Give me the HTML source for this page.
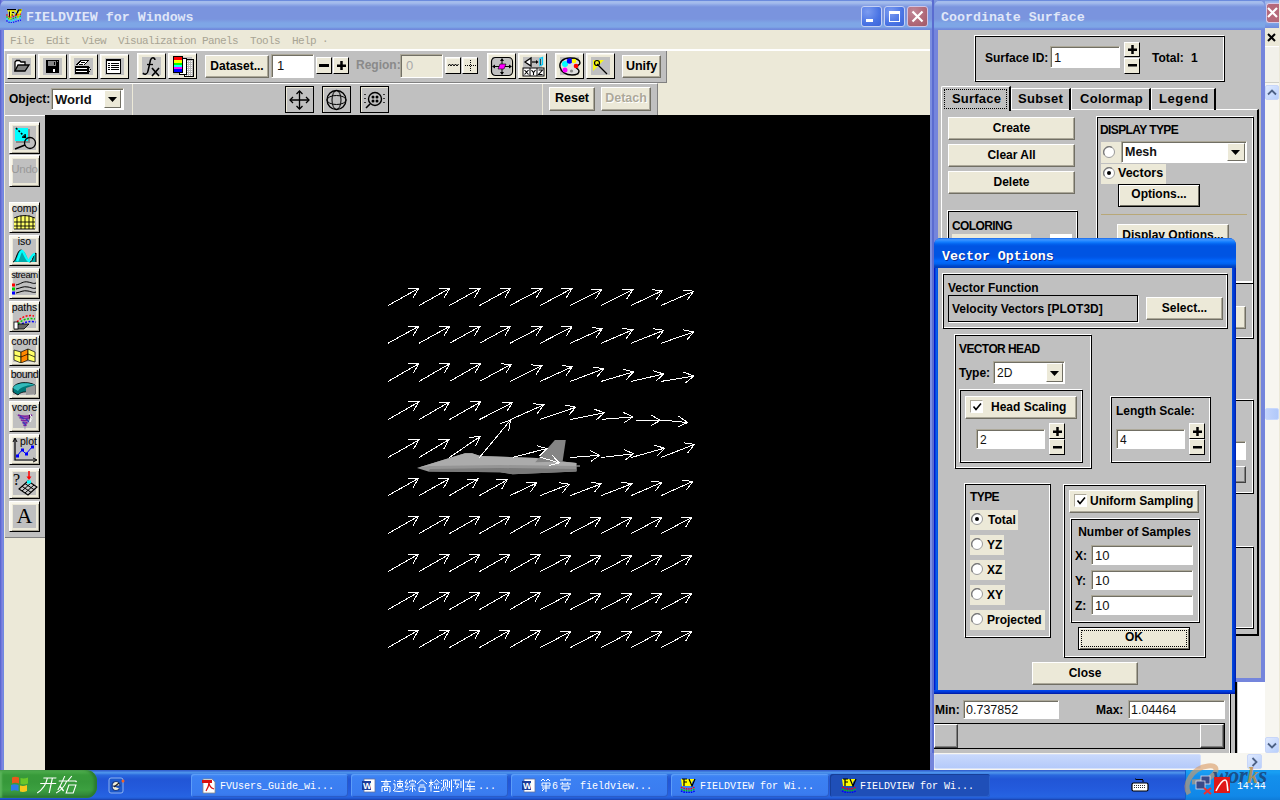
<!DOCTYPE html>
<html><head><meta charset="utf-8">
<style>
*{margin:0;padding:0;box-sizing:border-box}
html,body{width:1280px;height:800px;overflow:hidden;background:#000}
body{position:relative;font-family:"Liberation Sans",sans-serif;font-size:12px;color:#000}
.a{position:absolute}
.mono{font-family:"Liberation Mono",monospace}
.beige{background:#ECE9D8}
.gray{background:#C0C0C0}
.btn{position:absolute;background:#ECE9D8;border:1px solid;border-color:#fff #716F64 #716F64 #fff;box-shadow:inset -1px -1px #ACA899;font-weight:bold;font-size:12px;text-align:center;white-space:nowrap}
.ib{position:absolute;background:#ECE9D8;border:1px solid;border-color:#fff #000 #000 #fff;box-shadow:inset 1px 1px #F8F6EC}
.ib>i{position:absolute;left:4px;top:3px;right:4px;bottom:3px;background:#C0C0C0;display:block}
.fld{position:absolute;background:#fff;border:1px solid;border-color:#ACA899 #fff #fff #ACA899;box-shadow:inset 1px 1px #716F64;font-size:12px;color:#111;white-space:nowrap;overflow:hidden}
.et{position:absolute;border:1px solid #fff}
.et>b{position:absolute;left:0;top:0;right:-2px;bottom:-2px;border:1px solid #000;display:block}
.lbl{position:absolute;font-weight:bold;font-size:12px;white-space:nowrap}
.ttl{position:absolute;font-family:"Liberation Mono",monospace;font-weight:bold;font-size:13.3px;color:#DFE6F8;white-space:pre}
</style></head><body>

<!-- ============ MAIN WINDOW ============ -->
<div class="a" style="left:0;top:0;width:1280px;height:12px;background:#7A94DE"></div>
<div class="a" style="left:0;top:0;width:934px;height:770px;background:linear-gradient(90deg,#5A68D0 0,#5A68D0 1px,#7478DC 1px,#7478DC 2px,#7A88E0 2px,#7A88E0 3px,#7088E0 3px,#7088E0 4px,#7B8EDF 4px)"></div>
<div class="a" style="left:0;top:0;width:934px;height:30px;border-radius:7px 7px 0 0;background:linear-gradient(#6B8BDD 0,#6B8BDD 1px,#A4BCEC 1px,#A4BCEC 3px,#8CA6E6 5px,#7A94DE 7px,#7A94DE 19px,#7EA6E6 23px,#7EA6E6 27px,#7089DC 29px)"></div>
<svg class="a" style="left:6px;top:9px" width="16" height="14" viewBox="0 0 16 14"><path d="M1.5 0.5h9v2h-5v2h3v2h-3v4h-3v-8h-1z" fill="#ff0"/><path d="M1 0.5h9" stroke="#000" stroke-width="1.3"/><path d="M3.5 2.5v6M6 3.5h2M5.5 6h1.5" stroke="#000" stroke-width="1"/><path d="M10 2l2 6 3-7h-2" fill="none" stroke="#ff0" stroke-width="2"/><path d="M9.5 7l3-6h3" fill="none" stroke="#000" stroke-width="1.2"/><g stroke-width="1.3" fill="none" stroke-dasharray="1.2 1.2"><path d="M0.5 5.5Q4 10 8 7l7-2" stroke="#f00"/><path d="M0.5 7.5Q4 12 8 9l7-2" stroke="#0c0"/><path d="M0.5 9.5Q4 14 8 11l7-2" stroke="#0ff"/><path d="M0.5 11.5Q4 15 8 13l7-2" stroke="#00f"/></g></svg>
<div class="ttl" style="left:26px;top:10px">FIELDVIEW for Windows</div>
<!-- menu -->
<div class="a beige" style="left:4px;top:30px;width:926px;height:740px"></div>
<div class="a mono" style="left:10px;top:34.5px;font-size:11px;letter-spacing:-0.6px;color:#A8A494;white-space:pre">File  Edit  View  Visualization Panels  Tools  Help &#183;</div>
<div class="a" style="left:4px;top:49px;width:926px;height:2px;background:#fff"></div>
<!-- toolbar row1 -->
<div class="a gray" style="left:5px;top:51px;width:662px;height:32px;border-right:1px solid #808080;border-bottom:1px solid #808080"></div>
<!-- toolbar row2 -->
<div class="a gray" style="left:5px;top:83px;width:653px;height:32px;border-top:1px solid #fff;border-right:1px solid #808080"></div>
<div class="a" style="left:132px;top:84px;width:1px;height:31px;background:#ECE9D8"></div>
<div class="a" style="left:542px;top:84px;width:1px;height:31px;background:#ECE9D8"></div>
<!-- left toolbar -->
<div class="a gray" style="left:5px;top:115px;width:40px;height:423px;border-top:1px solid #fff;border-bottom:1px solid #808080"></div>
<!-- canvas -->
<div class="a" style="left:45px;top:115px;width:885px;height:655px;background:#000"></div>

<!-- ARROWS --><svg class="a" style="left:0;top:0" width="1280" height="800"><path d="M417 468L451 457.4L465 453.2L472 453.2L480.3 456L536.6 458L535.2 462.3L562.6 461.6L576.7 463L576.7 471.5L512.7 474.3L500 472.2L428.3 471.5Z" fill="#959595"/>
<path d="M417 468L451 457.4L465 453.2L472 453.2L480.3 456L536.6 458L562 461.6L576 463L576 466L500 465L430 466Z" fill="#ABABAB"/>
<path d="M430 469L500 468L576 469L576 471.5L512.7 474.3L500 472.2L428.3 471.5Z" fill="#7A7A7A"/>
<path d="M535.2 462.3L554.9 440.1L565.8 440.1L562.6 461.6Z" fill="#858585"/>
<path d="M576 466h4" stroke="#888" stroke-width="1.5"/><path d="M388 305.5L418.7 288.4M407.9 288.2L418.7 288.4L413.2 297.7M419 305.5L449.7 288.4M438.9 288.2L449.7 288.4L444.2 297.7M449.5 305.5L480 288.5M469.2 288.3L480 288.5L474.5 297.8M479.5 305.5L510.5 288.5M499.7 288.3L510.5 288.5L504.9 297.7M510 305.5L541.9 288.6M531.1 288.2L541.9 288.6L536.2 297.8M540.2 305.5L571.9 288.6M561.1 288.2L571.9 288.6L566.2 297.8M570.3 305.5L601.6 289.7M590.8 289.1L601.6 289.7L595.7 298.7M601.2 305.5L632.8 289.7M622 289.1L632.8 289.7L626.8 298.7M631.1 305.5L662.5 290.6M651.7 289.7L662.5 290.6L656.4 299.5M661.1 305.5L693.8 291.2M683 290L693.8 291.2L687.3 299.9M388 343.3L418.7 326.3M407.9 326.1L418.7 326.3L413.1 335.6M419 343.3L449.7 326.3M438.9 326.1L449.7 326.3L444.1 335.6M449.5 343.3L480 326.4M469.2 326.2L480 326.4L474.4 335.7M479.5 343.3L510.5 326.4M499.7 326.1L510.5 326.4L504.9 335.6M510 343.3L541.9 326.6M531.1 326.2L541.9 326.6L536.1 335.7M540.2 343.3L571.9 327M561.1 326.5L571.9 327L566.1 336.1M570.3 343.3L602.5 328.6M591.7 327.6L602.5 328.6L596.2 337.4M601.2 343.3L632.8 329.7M622.1 328.4L632.8 329.7L626.3 338.4M631.1 343.3L663.8 330.3M653.1 328.7L663.8 330.3L657.1 338.8M661.1 343.3L693.8 331.9M683.1 329.9L693.8 331.9L686.7 340.1M388 381.4L418.7 363.8M407.9 363.8L418.7 363.8L413.3 373.1M419 381.4L449.7 363.8M438.9 363.8L449.7 363.8L444.3 373.1M449.5 381.4L480.4 363.8M469.6 363.7L480.4 363.8L474.9 373.1M479.5 381.4L511.4 364.2M500.6 363.9L511.4 364.2L505.7 373.4M510 381.4L541.9 365.6M531.1 364.9L541.9 365.6L535.9 374.6M540.2 381.4L572.5 366.6M561.7 365.6L572.5 366.6L566.2 375.4M570.3 381.4L603.6 368.8M592.9 367L603.6 368.8L596.8 377.1M601.2 381.4L633.6 371.9M623.1 369.3L633.6 371.9L626.1 379.7M631.1 381.4L663.8 374M653.4 370.8L663.8 374L655.8 381.3M661.1 381.4L693.8 376M683.6 372.2L693.8 376L685.4 382.9M388 419.6L418.8 401.9M408 401.9L418.8 401.9L413.3 411.2M419 419.6L449.4 402M438.6 402L449.4 402L444 411.4M449.5 419.6L480.6 401.9M469.8 401.8L480.6 401.9L475.1 411.2M479.5 419.6L512.5 402.5M501.7 402L512.5 402.5L506.7 411.6M511 419.4L543.8 404.8M533 403.7L543.8 404.8L537.4 413.5M540.3 419.4L575.8 407.2M565.2 405.1L575.8 407.2L568.7 415.3M570.3 419.5L604.4 412.7M594.2 409.2L604.4 412.7L596.3 419.8M601.6 419.4L632.8 416.9M623 412.3L632.8 416.9L623.9 423M635.2 420L660.2 420.5M651 414.9L660.2 420.5L650.7 425.7M661 420L687.5 422.5M678.7 416.2L687.5 422.5L677.7 427M388 457.5L418.8 440M408 439.9L418.8 440L413.3 449.3M419 457.5L449 439.5M438.2 439.7L449 439.5L443.8 448.9M449.5 457.5L480 436.5M469.2 437.4L480 436.5L475.4 446.3M479.4 457.5L510.6 420M500.5 423.7L510.6 420L508.8 430.6M513 457.2L546.9 448.6M536.5 445.7L546.9 448.6L539.2 456.1M539.8 457L559.4 463M552 455.1L559.4 463L548.9 465.4M570.3 457.5L599.7 455.3M590 450.6L599.7 455.3L590.8 461.4M601.2 457.5L633.6 453.8M623.7 449.5L633.6 453.8L624.9 460.2M631.2 457.5L664.8 448.1M654.3 445.4L664.8 448.1L657.3 455.8M661 457.5L694.5 444.4M683.8 442.8L694.5 444.4L687.8 452.8M388 495.6L418.5 478.3M407.7 478.2L418.5 478.3L413 487.6M419 495.6L448.8 479M438 478.8L448.8 479L443.3 488.3M449.5 495.6L477.8 479M467 479.1L477.8 479L472.5 488.4M479.5 495.6L507 480M496.2 479.9L507 480L501.5 489.3M510 495.6L536.7 483M525.9 482.1L536.7 483L530.5 491.9M540.2 495.6L569.2 484.2M558.5 482.6L569.2 484.2L562.5 492.7M570.3 495.6L601.2 483.8M590.6 482.1L601.2 483.8L594.4 492.2M601.2 495.6L631.7 483.8M621 482.1L631.7 483.8L624.9 492.2M631.1 495.6L661.8 482.4M651.1 481.1L661.8 482.4L655.3 491.1M661.1 495.6L692.7 481.4M682 480.3L692.7 481.4L686.4 490.2M388 533.6L418.5 516.1M407.7 516.1L418.5 516.1L413.1 525.4M419 533.6L449.5 516.1M438.7 516.1L449.5 516.1L444.1 525.4M449.5 533.6L480 516.1M469.2 516.1L480 516.1L474.6 525.4M479.5 533.6L510 516.1M499.2 516.1L510 516.1L504.6 525.4M510 533.6L540.5 516.1M529.7 516.1L540.5 516.1L535.1 525.4M540.2 533.6L570.7 517.6M559.9 517.2L570.7 517.6L564.9 526.7M570.3 533.6L600.8 517.6M590 517.2L600.8 517.6L595 526.7M601.2 533.6L631.7 517.6M620.9 517.2L631.7 517.6L625.9 526.7M631.1 533.6L661.6 517.6M650.8 517.2L661.6 517.6L655.8 526.7M661.1 533.6L691.6 517.6M680.8 517.2L691.6 517.6L685.8 526.7M388 571.6L418.5 554.1M407.7 554.1L418.5 554.1L413.1 563.4M419 571.6L449.5 554.1M438.7 554.1L449.5 554.1L444.1 563.4M449.5 571.6L480 554.1M469.2 554.1L480 554.1L474.6 563.4M479.5 571.6L510 554.1M499.2 554.1L510 554.1L504.6 563.4M510 571.6L540.5 554.1M529.7 554.1L540.5 554.1L535.1 563.4M540.2 571.6L570.7 555.6M559.9 555.2L570.7 555.6L564.9 564.7M570.3 571.6L600.8 555.6M590 555.2L600.8 555.6L595 564.7M601.2 571.6L631.7 555.6M620.9 555.2L631.7 555.6L625.9 564.7M631.1 571.6L661.6 555.6M650.8 555.2L661.6 555.6L655.8 564.7M661.1 571.6L691.6 555.6M680.8 555.2L691.6 555.6L685.8 564.7M388 609.6L418.5 592.1M407.7 592.1L418.5 592.1L413.1 601.4M419 609.6L449.5 592.1M438.7 592.1L449.5 592.1L444.1 601.4M449.5 609.6L480 592.1M469.2 592.1L480 592.1L474.6 601.4M479.5 609.6L510 592.1M499.2 592.1L510 592.1L504.6 601.4M510 609.6L540.5 592.1M529.7 592.1L540.5 592.1L535.1 601.4M540.2 609.6L570.7 593.6M559.9 593.2L570.7 593.6L564.9 602.7M570.3 609.6L600.8 593.6M590 593.2L600.8 593.6L595 602.7M601.2 609.6L631.7 593.6M620.9 593.2L631.7 593.6L625.9 602.7M631.1 609.6L661.6 593.6M650.8 593.2L661.6 593.6L655.8 602.7M661.1 609.6L691.6 593.6M680.8 593.2L691.6 593.6L685.8 602.7M388 647.6L418.5 630.1M407.7 630.1L418.5 630.1L413.1 639.4M419 647.6L449.5 630.1M438.7 630.1L449.5 630.1L444.1 639.4M449.5 647.6L480 630.1M469.2 630.1L480 630.1L474.6 639.4M479.5 647.6L510 630.1M499.2 630.1L510 630.1L504.6 639.4M510 647.6L540.5 630.1M529.7 630.1L540.5 630.1L535.1 639.4M540.2 647.6L570.7 631.6M559.9 631.2L570.7 631.6L564.9 640.7M570.3 647.6L600.8 631.6M590 631.2L600.8 631.6L595 640.7M601.2 647.6L631.7 631.6M620.9 631.2L631.7 631.6L625.9 640.7M631.1 647.6L661.6 631.6M650.8 631.2L661.6 631.6L655.8 640.7M661.1 647.6L691.6 631.6M680.8 631.2L691.6 631.6L685.8 640.7" fill="none" stroke="#fff" stroke-width="1" shape-rendering="crispEdges"/></svg><!-- /ARROWS -->
<!-- row1 items -->
<div class="ib" style="left:7px;top:54px;width:29px;height:25px"><i></i><svg class="a" style="left:5px;top:4px" width="18" height="16" viewBox="0 0 18 16"><path d="M2 12V3l1.5-1.5h3L8 3h4v3" fill="#fff" stroke="#000" stroke-width="1.3"/><path d="M2 12L5 6h11l-4 6z" fill="#808080" stroke="#000" stroke-width="1.3"/></svg></div>
<div class="ib" style="left:38px;top:54px;width:29px;height:25px"><i></i><svg class="a" style="left:6px;top:4px" width="15" height="15" viewBox="0 0 15 15" shape-rendering="crispEdges"><rect x="1" y="1" width="13" height="13" fill="#000"/><rect x="3" y="2" width="8" height="5" fill="#888"/><rect x="9" y="3" width="1" height="3" fill="#000"/><rect x="3" y="9" width="9" height="4" fill="#000"/><rect x="8" y="10" width="2" height="3" fill="#fff"/><rect x="12" y="2" width="1" height="1" fill="#888"/></svg></div>
<div class="ib" style="left:69px;top:54px;width:29px;height:25px"><i></i><svg class="a" style="left:4px;top:4px" width="19" height="16" viewBox="0 0 19 16" shape-rendering="crispEdges"><path d="M6 1h9v1h-1v1h-1v1h-1v1h-1v1H2V5h1V4h1V3h1V2h1z" fill="#000"/><path d="M7 2h6v1h-1v1h-1v1h-1v1H4V5h1V4h1V3h1z" fill="#fff"/><rect x="7" y="3" width="4" height="1" fill="#000"/><rect x="5" y="5" width="4" height="1" fill="#000"/><rect x="1" y="7" width="14" height="8" fill="#000"/><rect x="2" y="9" width="11" height="1" fill="#fff"/><rect x="2" y="12" width="11" height="1" fill="#fff"/><rect x="15" y="8" width="1" height="1" fill="#000"/><rect x="16" y="10" width="1" height="1" fill="#000"/><rect x="15" y="12" width="1" height="1" fill="#000"/></svg></div>
<div class="ib" style="left:100px;top:54px;width:29px;height:25px"><i></i><svg class="a" style="left:4px;top:4px" width="17" height="15" viewBox="0 0 17 15" shape-rendering="crispEdges"><rect x="1" y="0" width="15" height="15" fill="#000"/><rect x="2" y="2" width="13" height="12" fill="#fff"/><rect x="3" y="4" width="2" height="1" fill="#000"/><rect x="6" y="4" width="8" height="1" fill="#000"/><rect x="3" y="6" width="2" height="1" fill="#000"/><rect x="6" y="6" width="8" height="1" fill="#000"/><rect x="3" y="8" width="2" height="1" fill="#000"/><rect x="6" y="8" width="8" height="1" fill="#000"/><rect x="3" y="10" width="2" height="1" fill="#000"/><rect x="6" y="10" width="8" height="1" fill="#000"/></svg></div>
<div class="ib" style="left:137px;top:53px;width:29px;height:26px"><i></i><svg class="a" style="left:3px;top:2px" width="22" height="21" viewBox="0 0 22 21"><path d="M14 4C13.5 1 10.5 1 9.5 4L7 15C6.5 18.5 3.5 19 2 17" fill="none" stroke="#000" stroke-width="1.5"/><path d="M6 8.5h6" stroke="#000" stroke-width="1.3"/><path d="M11 12l7 8M18 12l-7 8" stroke="#000" stroke-width="1.6"/></svg></div>
<div class="ib" style="left:168px;top:53px;width:29px;height:26px"><i></i><svg class="a" style="left:3px;top:2px" width="23" height="21" viewBox="0 0 23 21" shape-rendering="crispEdges"><rect x="12" y="3" width="10" height="18" fill="#000"/><rect x="13" y="4" width="8" height="16" fill="#bbb"/><path d="M13 5h8M13 7h8M13 9h8M13 11h8M13 13h8M13 15h8M13 17h8M13 19h8" stroke="#fff" stroke-dasharray="1 1"/><rect x="7" y="2" width="8" height="17" fill="#000"/><rect x="8" y="3" width="6" height="15" fill="#fff"/><rect x="1" y="0" width="10" height="17" fill="#000"/><rect x="2" y="1" width="8" height="3" fill="#f00"/><rect x="2" y="4" width="8" height="3" fill="#ff0"/><rect x="2" y="7" width="8" height="2" fill="#0f0"/><rect x="2" y="9" width="8" height="2" fill="#0ff"/><rect x="2" y="11" width="8" height="2" fill="#f0f"/><rect x="2" y="13" width="8" height="3" fill="#00f"/></svg></div>
<div class="btn" style="left:205px;top:55px;width:64px;height:23px;line-height:20px;font-size:12px">Dataset...</div>
<div class="fld" style="left:271px;top:54px;width:43px;height:24px;padding:3px 0 0 5px;font-size:13px">1</div>
<div class="ib" style="left:316px;top:57px;width:16px;height:17px;box-shadow:none;border-color:#fff #000 #000 #fff"><svg class="a" style="left:2px;top:6px" width="10" height="4"><rect x="0" y="0" width="10" height="3" fill="#000"/></svg></div>
<div class="ib" style="left:333px;top:57px;width:16px;height:17px;box-shadow:none"><svg class="a" style="left:3px;top:3px" width="9" height="9"><rect x="0" y="3.5" width="9" height="2.5" fill="#000"/><rect x="3.25" y="0" width="2.5" height="9" fill="#000"/></svg></div>
<div class="lbl" style="left:356px;top:58px;color:#8A8A8A;font-size:12px">Region:</div>
<div class="a" style="left:400px;top:54px;width:43px;height:24px;background:#ECE9D8;border:1px solid;border-color:#ACA899 #fff #fff #ACA899;box-shadow:inset 1px 1px #716F64;color:#aaa;font-size:13px;padding:3px 0 0 5px">0</div>
<div class="ib" style="left:445px;top:57px;width:16px;height:17px"><svg class="a" style="left:2px;top:5px" width="11" height="5"><path d="M0 3l1.5-2 1.5 2 1.5-2 1.5 2 1.5-2 1.5 2 1.5-2" fill="none" stroke="#000" stroke-width="1"/></svg></div>
<div class="ib" style="left:462px;top:57px;width:16px;height:17px"><svg class="a" style="left:2px;top:2px" width="11" height="11"><path d="M0 5.5h11M5.5 0v11" stroke="#000" stroke-dasharray="1 1"/></svg></div>
<div class="ib" style="left:487px;top:53px;width:29px;height:26px"><i></i><svg class="a" style="left:2px;top:2px" width="24" height="21" viewBox="0 0 24 21"><rect x="1.5" y="1.5" width="21" height="18" rx="4" fill="none" stroke="#000" stroke-width="1.2"/><path d="M12 3v15M3 10.5h18" stroke="#000"/><path d="M12 2l-2 3h4zM12 19l-2-3h4zM2 10.5l3-2v4zM22 10.5l-3-2v4z" fill="#000"/><path d="M8 13l2-5h6l-2 5z" fill="#f0f" stroke="#000" stroke-width=".6"/></svg></div>
<div class="ib" style="left:518px;top:53px;width:29px;height:26px"><i></i><svg class="a" style="left:3px;top:2px" width="23" height="21" viewBox="0 0 23 21"><path d="M3 6l6-4v8z" fill="#fff" stroke="#000" stroke-width="1.3"/><path d="M10 6h5" stroke="#000" stroke-width="1.2"/><path d="M14 4l2.5 2-2.5 2z" fill="#000"/><path d="M18 2.5l2.5-1v7l-2.5 1z" fill="none" stroke="#0cf" stroke-width="1.3"/><path d="M18.5 3v6" stroke="#000" stroke-width=".6"/><rect x="0.5" y="11.5" width="22" height="9" fill="#000"/><rect x="1.5" y="12.5" width="6" height="7" fill="#fff"/><rect x="8.5" y="12.5" width="6" height="7" fill="#fff"/><rect x="15.5" y="12.5" width="6" height="7" fill="#fff"/><path d="M2.5 14l4 4.5M6.5 14l-4 4.5M9.5 14l2 2.5 2-2.5M11.5 16.5v2.5M16.5 14h4l-4 4.5h4" stroke="#000" stroke-width="1.1" fill="none"/></svg></div>
<div class="ib" style="left:555px;top:53px;width:29px;height:26px"><i></i><svg class="a" style="left:2px;top:2px" width="24" height="21" viewBox="0 0 24 21"><path d="M12 2C5 2 1 6 2 11c1 5 6 8 12 8 5 0 7-2 7-4 0-2-3-2-3-4s4-1 4-4c0-3-4-5-10-5z" fill="#ddd" stroke="#000" stroke-width="1.4"/><circle cx="7" cy="8" r="3" fill="#0ff"/><circle cx="11.5" cy="5" r="2.7" fill="#00f"/><circle cx="16" cy="5" r="2.3" fill="#ff0"/><circle cx="18" cy="10" r="2.3" fill="#f00"/><circle cx="7" cy="14" r="2.5" fill="#f0f"/><circle cx="13.5" cy="15" r="1.6" fill="#888"/></svg></div>
<div class="ib" style="left:586px;top:53px;width:29px;height:26px"><i></i><svg class="a" style="left:4px;top:4px" width="20" height="18" viewBox="0 0 20 18"><path d="M2 2h11l-11 11z" fill="#ff0" opacity=".9"/><path d="M6 6l10 10" stroke="#000" stroke-width="1.3"/><circle cx="6" cy="5" r="2.5" fill="none" stroke="#000" stroke-width="1.2"/></svg></div>
<div class="btn" style="left:622px;top:55px;width:39px;height:23px;line-height:20px;font-size:12.5px">Unify</div>

<!-- row2 items -->
<div class="lbl" style="left:9px;top:92px;font-size:12px">Object:</div>
<div class="fld" style="left:51px;top:88px;width:73px;height:22px;padding:3px 0 0 3px;font-weight:bold;font-size:13px;box-shadow:inset 1px 1px #716F64">World</div>
<div class="btn" style="left:104px;top:90px;width:17px;height:18px;box-shadow:none"><svg class="a" style="left:3px;top:6px" width="10" height="6"><path d="M0 0h9l-4.5 5z" fill="#000"/></svg></div>
<div class="a" style="left:285px;top:86px;width:29px;height:27px;border:1px solid #000;box-shadow:inset 1px 1px #ECE9D8"><svg class="a" style="left:2px;top:2px" width="23" height="22" viewBox="0 0 23 22"><path d="M11.5 2v18M2 11h19" stroke="#000" stroke-width="1.3"/><path d="M8.5 5L11.5 2 14.5 5M8.5 17l3 3 3-3M5 8l-3 3 3 3M18 8l3 3-3 3" fill="none" stroke="#000" stroke-width="1.3"/></svg></div>
<div class="a" style="left:322px;top:86px;width:29px;height:27px;border:1px solid #000;box-shadow:inset 1px 1px #ECE9D8"><svg class="a" style="left:2px;top:2px" width="23" height="22" viewBox="0 0 23 22"><circle cx="11.5" cy="11" r="9.5" fill="none" stroke="#000" stroke-width="1.3"/><ellipse cx="11.5" cy="11" rx="9.5" ry="4.5" fill="none" stroke="#000"/><ellipse cx="11.5" cy="11" rx="4.5" ry="9.5" fill="none" stroke="#000"/></svg></div>
<div class="a" style="left:360px;top:86px;width:29px;height:27px;border:1px solid #000;box-shadow:inset 1px 1px #ECE9D8"><svg class="a" style="left:2px;top:2px" width="23" height="22" viewBox="0 0 23 22"><circle cx="12" cy="10" r="6.5" fill="none" stroke="#000" stroke-width="1.4"/><circle cx="10" cy="8" r="1.5"/><circle cx="14" cy="8" r="1.5"/><circle cx="10" cy="12" r="1.5"/><circle cx="14" cy="12" r="1.5"/><path d="M7 15l-4 4" stroke="#000" stroke-width="1.6"/><path d="M2 5v1M2 9v1M2 13v1M21 5v1M21 9v1M21 13v1" stroke="#000" stroke-width="1.4"/></svg></div>
<div class="btn" style="left:549px;top:87px;width:46px;height:24px;line-height:21px;font-size:12.5px">Reset</div>
<div class="btn" style="left:601px;top:87px;width:50px;height:24px;line-height:21px;font-size:12.5px;color:#ACA899;text-shadow:1px 1px #fff">Detach</div>

<!-- left toolbar buttons -->
<div class="ib" style="left:9px;top:122px;width:31px;height:32px;box-shadow:inset 2px 2px #F8F6EC,inset -1px -1px #ACA899"><i style="left:3px;top:3px;right:3px;bottom:3px"></i><svg class="a" style="left:3px;top:2px" width="24" height="26" viewBox="0 0 24 26"><rect x="3" y="4" width="14" height="14" fill="#888"/><rect x="2" y="3" width="13" height="13" fill="#0ff"/><path d="M3 3l9 9" stroke="#000" stroke-width="1.5" stroke-dasharray="2 1.5"/><path d="M9 12l3.5 0.5-0.5-3.5" fill="none" stroke="#000" stroke-width="1.4"/><circle cx="17" cy="18" r="5.5" fill="none" stroke="#000" stroke-width="1.3"/><path d="M12 20l-10 4" stroke="#000" stroke-width="1.8"/></svg></div>
<div class="ib" style="left:9px;top:155px;width:31px;height:32px;box-shadow:inset 2px 2px #F8F6EC,inset -1px -1px #ACA899"><i style="left:3px;top:3px;right:3px;bottom:3px"></i><div class="a" style="left:1px;top:7px;width:27px;text-align:center;font-size:11.5px;color:#999;letter-spacing:-0.3px">Undo</div></div>

<div class="ib" style="left:9px;top:202px;width:31px;height:31px;box-shadow:inset 2px 2px #F8F6EC,inset -1px -1px #ACA899"><i style="left:3px;top:3px;right:3px;bottom:3px"></i><div class="a" style="left:0;top:0px;width:29px;text-align:center;font-size:10.5px;line-height:11px">comp</div><svg class="a" style="left:3px;top:11px" width="23" height="16" viewBox="0 0 23 16"><path d="M1 4Q11.5-1 22 4V15H1z" fill="#ff6"/><path d="M1 4Q11.5-1 22 4M1 8h21M1 12h21M1 15h21M4 2.5V15M8 1.5V15M12 1V15M16 1.5V15M20 3V15" fill="none" stroke="#000" stroke-width=".9"/></svg></div>
<div class="ib" style="left:9px;top:235px;width:31px;height:31px;box-shadow:inset 2px 2px #F8F6EC,inset -1px -1px #ACA899"><i style="left:3px;top:3px;right:3px;bottom:3px"></i><div class="a" style="left:0;top:0px;width:29px;text-align:center;font-size:10.5px;line-height:11px">iso</div><svg class="a" style="left:2px;top:12px" width="25" height="15" viewBox="0 0 25 15"><path d="M1 14C4 14 5 2 9 2s6 12 9 12 3-8 6-9v9" fill="#0aa" stroke="#000" stroke-width="1"/><path d="M5 13c2-3 3-10 5-10s4 9 7 10c2-4 4-7 6-7" fill="none" stroke="#0ff" stroke-width="2.5"/></svg></div>
<div class="ib" style="left:9px;top:268px;width:31px;height:31px;box-shadow:inset 2px 2px #F8F6EC,inset -1px -1px #ACA899"><i style="left:3px;top:3px;right:3px;bottom:3px"></i><div class="a" style="left:-1px;top:0px;width:31px;text-align:center;font-size:9.5px;line-height:11px;letter-spacing:-.4px">stream</div><svg class="a" style="left:2px;top:11px" width="25" height="16" viewBox="0 0 25 16"><path d="M4 5c5-1 7-4 12-3s5 2 8 1M4 9c5-1 7-3 12-2s5 2 8 1M4 13c5-1 7-3 12-2s5 2 8 1" fill="none" stroke="#000" stroke-width="1"/><rect x="0" y="3.5" width="3" height="3" fill="#f00"/><rect x="0" y="7.5" width="3" height="3" fill="#0c0"/><rect x="0" y="11.5" width="3" height="3" fill="#00f"/></svg></div>
<div class="ib" style="left:9px;top:301px;width:31px;height:31px;box-shadow:inset 2px 2px #F8F6EC,inset -1px -1px #ACA899"><i style="left:3px;top:3px;right:3px;bottom:3px"></i><div class="a" style="left:0;top:0px;width:29px;text-align:center;font-size:10.5px;line-height:11px">paths</div><svg class="a" style="left:2px;top:11px" width="25" height="17" viewBox="0 0 25 17"><path d="M5 9Q12 1 22 3" fill="none" stroke="#f00" stroke-width="1.5" stroke-dasharray="2 1.5"/><path d="M6 11Q13 4 23 6" fill="none" stroke="#0c0" stroke-width="1.5" stroke-dasharray="2 1.5"/><path d="M7 13Q14 7 24 9" fill="none" stroke="#00f" stroke-width="1.5" stroke-dasharray="2 1.5"/><path d="M2 16l5-5h10l-5 5z" fill="#666" stroke="#000" stroke-width=".8"/><rect x="2" y="9" width="4" height="7" fill="#fff" stroke="#000" stroke-width=".8"/></svg></div>
<div class="ib" style="left:9px;top:335px;width:31px;height:31px;box-shadow:inset 2px 2px #F8F6EC,inset -1px -1px #ACA899"><i style="left:3px;top:3px;right:3px;bottom:3px"></i><div class="a" style="left:0;top:0px;width:29px;text-align:center;font-size:10.5px;line-height:11px">coord</div><svg class="a" style="left:3px;top:11px" width="23" height="16" viewBox="0 0 23 16"><path d="M1 3l7 2v11l-7-3z" fill="#ff6" stroke="#000" stroke-width=".7"/><path d="M8 5l7-3v11l-7 3z" fill="#f80" stroke="#000" stroke-width=".7"/><path d="M15 2l7 3v10l-7-2z" fill="#ff6" stroke="#000" stroke-width=".7"/><path d="M1 8l7 2 7-3 7 3" fill="none" stroke="#000" stroke-width=".7"/></svg></div>
<div class="ib" style="left:9px;top:368px;width:31px;height:31px;box-shadow:inset 2px 2px #F8F6EC,inset -1px -1px #ACA899"><i style="left:3px;top:3px;right:3px;bottom:3px"></i><div class="a" style="left:-1px;top:0px;width:31px;text-align:center;font-size:10.5px;line-height:11px;letter-spacing:-.3px">bound</div><svg class="a" style="left:2px;top:11px" width="25" height="16" viewBox="0 0 25 16"><path d="M1 8C3 2 16 1 23 5v9c-6-3-14-3-17 1L1 12z" fill="#077" stroke="#000" stroke-width=".8"/><path d="M1 8C3 3 15 2 23 5c-6 0-14 1-17 6z" fill="#3bb"/><path d="M14 8l9-3v9l-9 1z" fill="#999"/></svg></div>
<div class="ib" style="left:9px;top:401px;width:31px;height:31px;box-shadow:inset 2px 2px #F8F6EC,inset -1px -1px #ACA899"><i style="left:3px;top:3px;right:3px;bottom:3px"></i><div class="a" style="left:0;top:0px;width:29px;text-align:center;font-size:10.5px;line-height:11px">vcore</div><svg class="a" style="left:3px;top:10px" width="24" height="18" viewBox="0 0 24 18"><path d="M3 2c5 2 13 2 18 0-2 3-4 5-6 8-1 2-2 5-3 8-1-3-2-5-3-8C7 7 5 5 3 2z" fill="#A8A0B8"/><path d="M5 3c4 1.5 10 1.5 14 0M6.5 5.5c3.5 1 8 1 11 0M8 8c2.5 1 5 1 7.5 0M9.5 10.5c2 .8 3.5.8 5 0M10.5 13c1 .5 2 .5 3 0" stroke="#8020A0" stroke-width="1.6" fill="none"/><path d="M7 4l4 3M13 7l3 3M10 10l3 3" stroke="#3040C0" stroke-width="1.2"/><path d="M16 1l3 5-2 4M18 4l-1 6" stroke="#fff" stroke-width="1"/></svg></div>
<div class="ib" style="left:9px;top:434px;width:31px;height:31px;box-shadow:inset 2px 2px #F8F6EC,inset -1px -1px #ACA899"><i style="left:3px;top:3px;right:3px;bottom:3px"></i><svg class="a" style="left:2px;top:1px" width="26" height="27" viewBox="0 0 26 27"><path d="M3 3v21h21" fill="none" stroke="#000" stroke-width="1.2"/><path d="M1 6l2-4 2 4M21 22l4 2-4 2" fill="none" stroke="#000" stroke-width="1"/><path d="M5 20l5-6 4 4 6-7" fill="none" stroke="#00f" stroke-width="1"/><rect x="4" y="18.5" width="3" height="3" fill="#00f"/><rect x="9" y="12.5" width="3" height="3" fill="#00f"/><rect x="13" y="16.5" width="3" height="3" fill="#00f"/><rect x="19" y="9.5" width="3" height="3" fill="#00f"/><text x="8" y="9" font-family="Liberation Sans" font-size="10.5">plot</text></svg></div>
<div class="ib" style="left:9px;top:468px;width:31px;height:31px;box-shadow:inset 2px 2px #F8F6EC,inset -1px -1px #ACA899"><i style="left:3px;top:3px;right:3px;bottom:3px"></i><svg class="a" style="left:2px;top:1px" width="26" height="27" viewBox="0 0 26 27"><text x="1" y="15" font-family="Liberation Serif" font-size="16">?</text><path d="M7 19l9-8 9 6-9 8z" fill="#C8C8C8" stroke="#000" stroke-width="1.1"/><path d="M10 16.3l9 6M13 13.6l9 6M10 21l9-8M13 23l9-8" stroke="#000" stroke-width="1"/><path d="M17 1v7" stroke="#f00" stroke-width="1.5"/><path d="M14.5 6.5l2.5 3.5 2.5-3.5z" fill="#f00"/><rect x="15" y="10.5" width="4" height="3" fill="#0ff"/></svg></div>
<div class="ib" style="left:9px;top:501px;width:31px;height:31px;box-shadow:inset 2px 2px #F8F6EC,inset -1px -1px #ACA899"><i style="left:3px;top:3px;right:3px;bottom:3px"></i><div class="a" style="left:0;top:3px;width:29px;text-align:center;font-family:'Liberation Serif';font-size:22px;line-height:22px">A</div></div>

<!-- ============ COORDINATE SURFACE WINDOW ============ -->
<div class="a" style="left:934px;top:0;width:331px;height:682px;background:#7485DC;border-radius:7px 7px 0 0"></div>
<div class="a" style="left:934px;top:0;width:331px;height:30px;border-radius:7px 7px 0 0;background:linear-gradient(#6B8BDD 0,#6B8BDD 1px,#A4BCEC 1px,#A4BCEC 3px,#8CA6E6 5px,#7A94DE 7px,#7A94DE 19px,#7EA6E6 23px,#7EA6E6 27px,#7089DC 29px)"></div>
<div class="a" style="left:932px;top:0;width:2px;height:770px;background:#5A6CD0"></div>
<div class="ttl" style="left:941px;top:10px">Coordinate Surface</div>
<div class="a gray" style="left:938px;top:30px;width:323px;height:648px"></div>
<div class="et" style="left:974px;top:35px;width:250px;height:46px"><b></b></div>
<div class="lbl" style="left:985px;top:51px">Surface ID:</div>
<div class="fld" style="left:1050px;top:46px;width:70px;height:22px;padding:3px 0 0 3px;font-size:13px">1</div>
<div class="ib" style="left:1124px;top:42px;width:16px;height:15px;box-shadow:none"><svg class="a" style="left:3px;top:2px" width="9" height="9"><rect x="0" y="3.5" width="9" height="2.5" fill="#000"/><rect x="3.25" y="0" width="2.5" height="9" fill="#000"/></svg></div>
<div class="ib" style="left:1124px;top:58px;width:16px;height:16px;box-shadow:none"><svg class="a" style="left:3px;top:5px" width="9" height="3"><rect x="0" y="0" width="9" height="2.5" fill="#000"/></svg></div>
<div class="lbl" style="left:1152px;top:51px">Total:</div><div class="lbl" style="left:1191px;top:51px">1</div>
<!-- tabs -->
<div class="a" style="left:941px;top:109px;width:318px;height:527px;border-top:1px solid #fff;border-left:1px solid #fff;border-right:2px solid #000;border-bottom:2px solid #000"></div>
<div class="a gray" style="left:941px;top:86px;width:70px;height:25px;border-top:1px solid #fff;border-left:1px solid #fff;border-right:2px solid #000;border-radius:2px 0 0 0"></div>
<div class="a" style="left:944px;top:89px;width:63px;height:20px;border:1px dotted #000"></div>
<div class="lbl" style="left:952px;top:91px;font-size:13px;letter-spacing:.2px">Surface</div>
<div class="a" style="left:1011px;top:88px;width:60px;height:22px;border-top:1px solid #fff;border-left:1px solid #fff;border-right:2px solid #000"></div>
<div class="lbl" style="left:1018px;top:91px;font-size:13px;letter-spacing:.3px">Subset</div>
<div class="a" style="left:1071px;top:88px;width:80px;height:22px;border-top:1px solid #fff;border-left:1px solid #fff;border-right:2px solid #000"></div>
<div class="lbl" style="left:1080px;top:91px;font-size:13px;letter-spacing:.3px">Colormap</div>
<div class="a" style="left:1151px;top:88px;width:65px;height:22px;border-top:1px solid #fff;border-left:1px solid #fff;border-right:2px solid #000"></div>
<div class="lbl" style="left:1159px;top:91px;font-size:13px;letter-spacing:.6px">Legend</div>
<div class="a gray" style="left:942px;top:109px;width:67px;height:2px"></div>
<!-- panel contents -->
<div class="btn" style="left:948px;top:117px;width:127px;height:23px;line-height:20px">Create</div>
<div class="btn" style="left:948px;top:144px;width:127px;height:23px;line-height:20px">Clear All</div>
<div class="btn" style="left:948px;top:171px;width:127px;height:23px;line-height:20px">Delete</div>
<div class="et" style="left:947px;top:210px;width:130px;height:60px"><b></b></div>
<div class="lbl" style="left:952px;top:219px;letter-spacing:-0.6px">COLORING</div>
<div class="a beige" style="left:952px;top:234px;width:79px;height:10px"></div>
<div class="a" style="left:1050px;top:234px;width:22px;height:10px;background:#fff"></div>

<div class="et" style="left:1096px;top:116px;width:157px;height:166px"><b></b></div>
<div class="lbl" style="left:1100px;top:123px;letter-spacing:-0.6px">DISPLAY TYPE</div>
<div class="a beige" style="left:1101px;top:142px;width:20px;height:21px"></div>
<svg class="a" style="left:1102px;top:145px" width="14" height="14"><circle cx="7" cy="7" r="5.5" fill="#fff" stroke="#9a9a9a"/><path d="M2.5 10A5.5 5.5 0 0 1 10 2.5" fill="none" stroke="#777" stroke-width="1.2"/></svg>
<div class="fld" style="left:1121px;top:141px;width:126px;height:22px;padding:3px 0 0 3px;font-weight:bold;font-size:12.5px">Mesh</div>
<div class="btn" style="left:1227px;top:143px;width:18px;height:18px;box-shadow:none"><svg class="a" style="left:3px;top:6px" width="10" height="6"><path d="M0 0h9l-4.5 5z" fill="#000"/></svg></div>
<div class="a beige" style="left:1101px;top:164px;width:65px;height:20px"></div>
<svg class="a" style="left:1102px;top:166px" width="14" height="14"><circle cx="7" cy="7" r="5.5" fill="#fff" stroke="#9a9a9a"/><path d="M2.5 10A5.5 5.5 0 0 1 10 2.5" fill="none" stroke="#777" stroke-width="1.2"/><circle cx="7" cy="7" r="2" fill="#000"/></svg>
<div class="lbl" style="left:1118px;top:166px;font-size:12.5px">Vectors</div>
<div class="btn" style="left:1118px;top:184px;width:82px;height:23px;line-height:19px;border:1px solid #000;box-shadow:inset 1px 1px #fff,inset -1px -1px #716F64">Options...</div>
<div class="a" style="left:1101px;top:214px;width:146px;height:1px;background:#B8A878"></div>
<div class="btn" style="left:1117px;top:224px;width:112px;height:23px;line-height:20px">Display Options...</div>

<div class="et" style="left:1096px;top:282px;width:157px;height:56px"><b></b></div>
<div class="btn" style="left:1200px;top:306px;width:46px;height:23px"></div>
<div class="et" style="left:1096px;top:399px;width:157px;height:94px"><b></b></div>
<div class="fld" style="left:1180px;top:441px;width:66px;height:19px"></div>
<div class="a" style="left:1200px;top:466px;width:46px;height:17px;background:#C0C0C0;border:1px solid;border-color:#fff #404040 #404040 #fff;box-shadow:inset -1px -1px #808080"></div>
<div class="et" style="left:1096px;top:546px;width:157px;height:82px"><b></b></div>

<!-- ============ VECTOR OPTIONS DIALOG ============ -->
<div class="a" style="left:934px;top:238px;width:302px;height:456px;background:linear-gradient(90deg,#0018C8 0,#0020D0 1px,#1068E8 2px,#0058E8 3px,#0050E0 4px,#0050E0 298px,#0040D8 299px,#0030C8 301px,#0018A0 302px);border-radius:7px 7px 0 0"></div>
<div class="a" style="left:934px;top:238px;width:302px;height:30px;border-radius:7px 7px 0 0;background:linear-gradient(#0A5EE8 0,#3C8CF8 1px,#3A93FF 2px,#127DFF 4px,#0262EE 6px,#0054E3 8px,#0054E3 18px,#0058EB 20px,#026AFE 23px,#0062EF 26px,#0052D6 27px,#0040C0 29px)"></div>
<div class="a" style="left:934px;top:690px;width:302px;height:4px;background:linear-gradient(#0048F0,#0038D8 2px,#0018A0 4px)"></div>
<div class="ttl" style="left:942px;top:249px;color:#fff;text-shadow:1px 1px #0A2A90">Vector Options</div>
<div class="a gray" style="left:938px;top:268px;width:294px;height:422px"></div>

<div class="et" style="left:942px;top:273px;width:285px;height:55px"><b></b></div>
<div class="lbl" style="left:948px;top:281px">Vector Function</div>
<div class="a" style="left:948px;top:295px;width:190px;height:27px;border:1px solid #000;box-shadow:1px 1px #fff"></div>
<div class="lbl" style="left:952px;top:302px">Velocity Vectors [PLOT3D]</div>
<div class="btn" style="left:1146px;top:297px;width:77px;height:23px;line-height:20px">Select...</div>

<div class="et" style="left:954px;top:334px;width:137px;height:134px"><b></b></div>
<div class="lbl" style="left:959px;top:342px;letter-spacing:-0.6px">VECTOR HEAD</div>
<div class="lbl" style="left:959px;top:366px">Type:</div>
<div class="fld" style="left:993px;top:361px;width:72px;height:23px;padding:4px 0 0 3px">2D</div>
<div class="btn" style="left:1046px;top:363px;width:17px;height:19px;box-shadow:none"><svg class="a" style="left:3px;top:7px" width="10" height="6"><path d="M0 0h9l-4.5 5z" fill="#000"/></svg></div>
<div class="et" style="left:959px;top:389px;width:123px;height:73px"><b></b></div>
<div class="btn" style="left:965px;top:396px;width:112px;height:23px;line-height:20px;text-align:left;padding-left:25px">Head Scaling</div>
<div class="a" style="left:970px;top:400px;width:13px;height:13px;background:#fff;border:1px solid;border-color:#ACA899 #fff #fff #ACA899"><svg class="a" style="left:1px;top:1px" width="10" height="10"><path d="M1.5 4.5l2.5 3 5-6" fill="none" stroke="#000" stroke-width="1.6"/></svg></div>
<div class="fld" style="left:976px;top:429px;width:69px;height:20px;padding:3px 0 0 3px">2</div>
<div class="ib" style="left:1049px;top:423px;width:16px;height:16px;box-shadow:none"><svg class="a" style="left:3px;top:3px" width="9" height="9"><rect x="0" y="3.5" width="9" height="2.5" fill="#000"/><rect x="3.25" y="0" width="2.5" height="9" fill="#000"/></svg></div>
<div class="ib" style="left:1049px;top:439px;width:16px;height:16px;box-shadow:none"><svg class="a" style="left:3px;top:6px" width="9" height="3"><rect x="0" y="0" width="9" height="2.5" fill="#000"/></svg></div>

<div class="et" style="left:1110px;top:396px;width:100px;height:66px"><b></b></div>
<div class="lbl" style="left:1116px;top:404px">Length Scale:</div>
<div class="fld" style="left:1116px;top:429px;width:69px;height:20px;padding:3px 0 0 3px">4</div>
<div class="ib" style="left:1189px;top:423px;width:16px;height:16px;box-shadow:none"><svg class="a" style="left:3px;top:3px" width="9" height="9"><rect x="0" y="3.5" width="9" height="2.5" fill="#000"/><rect x="3.25" y="0" width="2.5" height="9" fill="#000"/></svg></div>
<div class="ib" style="left:1189px;top:439px;width:16px;height:16px;box-shadow:none"><svg class="a" style="left:3px;top:6px" width="9" height="3"><rect x="0" y="0" width="9" height="2.5" fill="#000"/></svg></div>

<div class="et" style="left:964px;top:483px;width:86px;height:154px"><b></b></div>
<div class="lbl" style="left:970px;top:490px;letter-spacing:-0.6px">TYPE</div>
<div class="a beige" style="left:970px;top:510px;width:48px;height:20px"></div>
<div class="a beige" style="left:970px;top:535px;width:34px;height:20px"></div>
<div class="a beige" style="left:970px;top:560px;width:35px;height:20px"></div>
<div class="a beige" style="left:970px;top:585px;width:35px;height:20px"></div>
<div class="a beige" style="left:970px;top:610px;width:75px;height:20px"></div>
<svg class="a" style="left:970px;top:512px" width="14" height="14"><circle cx="7" cy="7" r="5.5" fill="#fff" stroke="#9a9a9a"/><path d="M2.5 10A5.5 5.5 0 0 1 10 2.5" fill="none" stroke="#777" stroke-width="1.2"/><circle cx="7" cy="7" r="2" fill="#000"/></svg>
<svg class="a" style="left:970px;top:537px" width="14" height="14"><circle cx="7" cy="7" r="5.5" fill="#fff" stroke="#9a9a9a"/><path d="M2.5 10A5.5 5.5 0 0 1 10 2.5" fill="none" stroke="#777" stroke-width="1.2"/></svg>
<svg class="a" style="left:970px;top:562px" width="14" height="14"><circle cx="7" cy="7" r="5.5" fill="#fff" stroke="#9a9a9a"/><path d="M2.5 10A5.5 5.5 0 0 1 10 2.5" fill="none" stroke="#777" stroke-width="1.2"/></svg>
<svg class="a" style="left:970px;top:587px" width="14" height="14"><circle cx="7" cy="7" r="5.5" fill="#fff" stroke="#9a9a9a"/><path d="M2.5 10A5.5 5.5 0 0 1 10 2.5" fill="none" stroke="#777" stroke-width="1.2"/></svg>
<svg class="a" style="left:970px;top:612px" width="14" height="14"><circle cx="7" cy="7" r="5.5" fill="#fff" stroke="#9a9a9a"/><path d="M2.5 10A5.5 5.5 0 0 1 10 2.5" fill="none" stroke="#777" stroke-width="1.2"/></svg>
<div class="lbl" style="left:988px;top:513px">Total</div>
<div class="lbl" style="left:987px;top:538px">YZ</div>
<div class="lbl" style="left:987px;top:563px">XZ</div>
<div class="lbl" style="left:987px;top:588px">XY</div>
<div class="lbl" style="left:987px;top:613px">Projected</div>

<div class="et" style="left:1063px;top:484px;width:142px;height:173px"><b></b></div>
<div class="btn" style="left:1069px;top:490px;width:130px;height:23px;line-height:20px;text-align:left;padding-left:20px">Uniform Sampling</div>
<div class="a" style="left:1074px;top:494px;width:13px;height:13px;background:#fff;border:1px solid;border-color:#ACA899 #fff #fff #ACA899"><svg class="a" style="left:1px;top:1px" width="10" height="10"><path d="M1.5 4.5l2.5 3 5-6" fill="none" stroke="#000" stroke-width="1.6"/></svg></div>
<div class="et" style="left:1070px;top:518px;width:129px;height:104px"><b></b></div>
<div class="lbl" style="left:1070px;top:525px;width:129px;text-align:center">Number of Samples</div>
<div class="lbl" style="left:1075px;top:549px">X:</div>
<div class="lbl" style="left:1075px;top:574px">Y:</div>
<div class="lbl" style="left:1075px;top:599px">Z:</div>
<div class="fld" style="left:1091px;top:545px;width:102px;height:20px;padding:2px 0 0 3px;font-size:13px">10</div>
<div class="fld" style="left:1091px;top:570px;width:102px;height:20px;padding:2px 0 0 3px;font-size:13px">10</div>
<div class="fld" style="left:1091px;top:595px;width:102px;height:20px;padding:2px 0 0 3px;font-size:13px">10</div>
<div class="btn" style="left:1078px;top:627px;width:112px;height:23px;line-height:19px;border:1px solid #000;box-shadow:inset 1px 1px #fff,inset -1px -1px #716F64">OK</div>
<div class="a" style="left:1081px;top:630px;width:106px;height:17px;border:1px dotted #000"></div>
<div class="btn" style="left:1032px;top:662px;width:106px;height:23px;line-height:20px">Close</div>

<!-- ============ BACKGROUND RIGHT STRIP ============ -->
<div class="a" style="left:1265px;top:0;width:15px;height:770px;background:#F7F6F0"></div>
<div class="a" style="left:1265px;top:0;width:15px;height:28px;background:linear-gradient(#6B8BDD 0,#A4BCEC 2px,#7A94DE 7px,#7A94DE 19px,#7EA6E6 23px,#7089DC 28px)"></div>
<div class="a" style="left:1266px;top:3px;width:14px;height:20px;background:#B5697A;border:1px solid #D8C8E8;border-right:none;border-radius:3px 0 0 3px"></div>
<svg class="a" style="left:1267px;top:7px" width="13" height="12"><path d="M1 1l9 9M10 1l-9 9" stroke="#fff" stroke-width="2.2"/></svg>
<div class="a" style="left:1265px;top:28px;width:15px;height:18px;background:#ECE9D8"></div>
<svg class="a" style="left:1267px;top:33px" width="9" height="9"><path d="M1 1l7 7M8 1l-7 7" stroke="#000" stroke-width="2"/></svg>
<div class="a" style="left:1265px;top:46px;width:15px;height:1px;background:#fff"></div>
<div class="a" style="left:1265px;top:47px;width:15px;height:36px;background:#F2F1EA;border-bottom:1px solid #D0D0C8"></div>
<div class="a" style="left:1265px;top:85px;width:14px;height:15px;border-radius:2px;background:linear-gradient(135deg,#E0EAFE,#B8CFFC);border:1px solid #C8D6F8"></div>
<svg class="a" style="left:1267px;top:89px" width="10" height="7"><path d="M1 5.5l4-4 4 4" fill="none" stroke="#4D6185" stroke-width="1.8"/></svg>
<div class="a" style="left:1265px;top:408px;width:14px;height:12px;border-radius:2px;background:linear-gradient(90deg,#C4D4FC,#B0C8FA);border:1px solid #C8D8FC"></div>
<div class="a" style="left:1265px;top:737px;width:14px;height:16px;border-radius:2px;background:linear-gradient(135deg,#E0EAFE,#B8CFFC);border:1px solid #C8D6F8"></div>
<svg class="a" style="left:1267px;top:742px" width="10" height="7"><path d="M1 1.5l4 4 4-4" fill="none" stroke="#4D6185" stroke-width="1.8"/></svg>
<div class="a" style="left:1279px;top:0;width:1px;height:770px;background:#ECE9D8"></div>

<!-- white area below CS window -->
<div class="a" style="left:1236px;top:682px;width:29px;height:71px;background:#fff"></div>

<!-- ============ LOWER PANEL (Min/Max) ============ -->
<div class="a gray" style="left:934px;top:694px;width:302px;height:59px"></div>
<div class="a" style="left:1229px;top:694px;width:1px;height:59px;background:#fff"></div><div class="a" style="left:1230px;top:694px;width:1px;height:59px;background:#000"></div>
<div class="a" style="left:1235px;top:682px;width:2px;height:71px;background:#000"></div><div class="a" style="left:1237px;top:682px;width:1px;height:71px;background:#C8C8C8"></div>
<div class="lbl" style="left:935px;top:703px">Min:</div>
<div class="fld" style="left:963px;top:700px;width:96px;height:19px;padding:2px 0 0 2px;font-size:12.5px">0.737852</div>
<div class="lbl" style="left:1096px;top:703px">Max:</div>
<div class="fld" style="left:1128px;top:700px;width:97px;height:19px;padding:2px 0 0 2px;font-size:12.5px">1.04464</div>
<div class="a" style="left:934px;top:723px;width:291px;height:26px;background:#C0C0C0;border:1px solid #000;border-left:none"></div>
<div class="a" style="left:934px;top:724px;width:24px;height:24px;background:#C0C0C0;border:1px solid;border-color:#fff #404040 #404040 #fff;box-shadow:inset -1px -1px #808080"></div>
<div class="a" style="left:1200px;top:724px;width:24px;height:24px;background:#C0C0C0;border:1px solid;border-color:#fff #404040 #404040 #fff;box-shadow:inset -1px -1px #808080"></div>
<!-- horizontal scrollbar -->
<div class="a" style="left:934px;top:753px;width:346px;height:17px;background:#F7F6F0"></div>
<div class="a" style="left:934px;top:754px;width:267px;height:15px;border-radius:2px;background:linear-gradient(#C8D8FC,#B4CAFA);border:1px solid #D4E0FC"></div>
<div class="a" style="left:1247px;top:754px;width:15px;height:15px;border-radius:2px;background:linear-gradient(135deg,#E0EAFE,#B8CFFC);border:1px solid #C8D6F8"></div>
<svg class="a" style="left:1251px;top:757px" width="8" height="10"><path d="M1.5 1l4 4-4 4" fill="none" stroke="#4D6185" stroke-width="1.8"/></svg>
<div class="a" style="left:930px;top:753px;width:4px;height:17px;background:#7485DC"></div>

<!-- ============ MAIN WINDOW title buttons ============ -->
<div class="a" style="left:861px;top:6px;width:21px;height:21px;border-radius:3px;border:1px solid #C4D0F4;background:radial-gradient(circle at 30% 25%,#7C9CF0,#4A74E4 60%,#3C64D8)"></div>
<div class="a" style="left:866px;top:19px;width:7px;height:3px;background:#fff"></div>
<div class="a" style="left:884px;top:6px;width:21px;height:21px;border-radius:3px;border:1px solid #C4D0F4;background:radial-gradient(circle at 30% 25%,#7C9CF0,#4A74E4 60%,#3C64D8)"></div>
<div class="a" style="left:889px;top:11px;width:11px;height:11px;border:1px solid #fff;border-top-width:3px"></div>
<div class="a" style="left:907px;top:6px;width:21px;height:21px;border-radius:3px;border:1px solid #D0C4E4;background:radial-gradient(circle at 30% 25%,#C08898,#B06878 60%,#A05868)"></div>
<svg class="a" style="left:911px;top:10px" width="13" height="13"><path d="M1.5 1.5l10 10M11.5 1.5l-10 10" stroke="#fff" stroke-width="2.2"/></svg>

<!-- ============ TASKBAR ============ -->
<div class="a" style="left:0;top:770px;width:1280px;height:30px;background:linear-gradient(#3462D0 0,#3462D0 1px,#4C92EA 2px,#4C92EA 3px,#2A68DE 5px,#2156D6 9px,#235ADC 18px,#2664E2 27px,#2058D0 28.5px,#1A3FA8 30px)"></div>
<div class="a" style="left:0;top:770px;width:97px;height:28px;border-radius:0 11px 11px 0;background:linear-gradient(#5CB85C 0,#4AAA4A 2px,#389A3A 5px,#36983A 12px,#3CA040 20px,#32883A 25px,#256E28 28px);box-shadow:inset -3px 0 3px #2A7A2E,inset 2px 0 2px #5AB45A"></div>
<svg class="a" style="left:10px;top:775px" width="20" height="18" viewBox="0 0 20 18"><path d="M2 2.5Q5 1 9 2.5V8.5Q5 7 2 8.5z" fill="#E8581C"/><path d="M10.5 3Q14 4 18 2.5V8.5Q14 10 10.5 9z" fill="#6AC72A"/><path d="M1 10Q4.5 8.5 8.5 10V16Q4.5 14.5 1 16z" fill="#2D7CE8"/><path d="M10 10.5Q13.5 11.5 17 10V16Q13.5 17.5 10 16.5z" fill="#F8C81C"/></svg>
<svg class="a" style="left:36px;top:775px;transform:skewX(-12deg)" width="42" height="19" viewBox="0 0 42 19"><g fill="none" stroke="#fff" stroke-width="1.2"><path d="M6 3h13M4 8.5h16M10 3.5C10 11 7 15 3 18M15 3.5V18"/><path d="M27 1C26 6 25 10 23 15M22 6h8C29 11 27 15 22 18M24 11l5 5"/><path d="M34 1l-3 5h8l1 1M33 10h7l-1 8h-7z"/></g></svg>
<svg class="a" style="left:108px;top:777px" width="17" height="17" viewBox="0 0 17 17"><rect x="1" y="1" width="14" height="15" rx="2" fill="#1E5ACD" stroke="#A8C8F8" stroke-width=".8"/><path d="M4 9h8c0-3-2-4.5-4-4.5S4 6 4 9s2 4.5 4 4.5c1.5 0 3-.8 3.5-2" fill="#F4F0D8" stroke="#1A3C88" stroke-width="1.2"/><path d="M6 10l5-4" stroke="#222" stroke-width="1.2"/><circle cx="15" cy="4" r="1.5" fill="#F86020"/></svg>

<div class="a" style="left:191px;top:774px;width:157px;height:23px;border-radius:3px;background:linear-gradient(#4A90F4,#3C81F3 3px,#3A7CF0 20px,#3370E4);box-shadow:inset 1px 1px #5C9CF8,inset -1px -1px #2A5CC8"></div>
<svg class="a" style="left:202px;top:778px" width="14" height="16"><path d="M1 1h9l3 3v11H1z" fill="#fff" stroke="#888" stroke-width=".8"/><rect x="0" y="2" width="10" height="3" fill="#D81010"/><path d="M4 13c2-3 3-6 3-9 0 3 2 6 5 7" fill="none" stroke="#D81010" stroke-width="1.2"/></svg>
<div class="a mono" style="left:220px;top:781px;font-size:10px;color:#fff;white-space:pre">FVUsers_Guide_wi...</div>

<div class="a" style="left:351px;top:774px;width:157px;height:23px;border-radius:3px;background:linear-gradient(#4A90F4,#3C81F3 3px,#3A7CF0 20px,#3370E4);box-shadow:inset 1px 1px #5C9CF8,inset -1px -1px #2A5CC8"></div>
<svg class="a" style="left:361px;top:778px" width="15" height="15"><rect x="3" y="1" width="11" height="13" fill="#fff" stroke="#6070A0" stroke-width=".8"/><rect x="1" y="3" width="9" height="9" fill="#1A3C98"/><text x="2" y="11" font-family="Liberation Sans" font-weight="bold" font-size="9" fill="#fff">W</text></svg>
<svg class="a" style="left:380px;top:779px" width="96" height="14" viewBox="0 0 96 14"><g fill="none" stroke="#fff" stroke-width="1"><path transform="translate(0 0)" d="M6 0.5v1.5M1 2.5h10M4 4h4v2H4zM2 13V7.5h8V13l-1 0M4.5 9h3v2.5h-3z"/><path transform="translate(12 0)" d="M2 1l1 1.5M1 5h2v5l-2 2M2 12q5 1 10 0M5 2.5h6M8 0.5v9M5.5 4.5h5v3h-5zM8 7.5l-3 3M8 7.5l3 3"/><path transform="translate(24 0)" d="M3 0.5l-2 3.5h3l-3 4h4M1 11l3-1M5.5 2h6M8.5 0.5v1.5M5.5 2v2M11.5 2v2M6.5 5h4M5.5 7h6M8.5 7v6M7 9l-1.5 2.5M10 9l1.5 2.5"/><path transform="translate(36 0)" d="M6 0.5L1 5M6 0.5l5 4.5M3.5 6h5M3 8h6v4.5H3z"/><path transform="translate(48 0)" d="M1 3.5h4M3 0.5v12M3 4L1 8M3 4l2 2M8.5 0.5L5.5 4M8.5 0.5l3 3.5M6.5 5h4M6 7l1 3M8.5 6.5v3.5M11 7l-1 3M5.5 12.5h6"/><path transform="translate(60 0)" d="M1 1l1 1M0.5 4l1.5 1M1 12l1.5-4M3.5 1h4v7h-4zM5.5 3v4M4.5 9l-1.5 3M6.5 9l1.5 3M9.5 2v7M11.5 0.5v12l-1 0"/><path transform="translate(72 0)" d="M1 1h7M4 1l-1 4h4l-3 5M2 7l-1 1M4.5 7l2 2M9 2v7M11.5 0.5v12l-1 0"/><path transform="translate(84 0)" d="M1 3h10M6 0.5L3 7.5h8M6 5v8M1 10h10"/></g></svg>
<div class="a mono" style="left:478px;top:781px;font-size:10px;color:#fff;white-space:pre">...</div>

<div class="a" style="left:511px;top:774px;width:157px;height:23px;border-radius:3px;background:linear-gradient(#4A90F4,#3C81F3 3px,#3A7CF0 20px,#3370E4);box-shadow:inset 1px 1px #5C9CF8,inset -1px -1px #2A5CC8"></div>
<svg class="a" style="left:521px;top:778px" width="15" height="15"><rect x="3" y="1" width="11" height="13" fill="#fff" stroke="#6070A0" stroke-width=".8"/><rect x="1" y="3" width="9" height="9" fill="#1A3C98"/><text x="2" y="11" font-family="Liberation Sans" font-weight="bold" font-size="9" fill="#fff">W</text></svg>
<svg class="a" style="left:540px;top:778px" width="12" height="14" viewBox="0 0 12 14"><g fill="none" stroke="#fff" stroke-width="1"><path d="M1 3l2-2 2 2M6 3l2-2 2 2M2 5h8v3H2zM2 10h8M6 5v9M2 13l2-2"/></g></svg>
<div class="a mono" style="left:552px;top:781px;font-size:10px;color:#fff;white-space:pre">6</div>
<svg class="a" style="left:559px;top:778px" width="13" height="14" viewBox="0 0 13 14"><g fill="none" stroke="#fff" stroke-width="1"><path d="M6 0v2M1 2h11M3 4l1 2M9 4l-1 2M1 6h11M3 8h7v3H3zM6 11v3"/></g></svg>
<div class="a mono" style="left:580px;top:781px;font-size:10px;color:#fff;white-space:pre">fieldview...</div>

<div class="a" style="left:671px;top:774px;width:158px;height:23px;border-radius:3px;background:linear-gradient(#4A90F4,#3C81F3 3px,#3A7CF0 20px,#3370E4);box-shadow:inset 1px 1px #5C9CF8,inset -1px -1px #2A5CC8"></div>
<svg class="a" style="left:680px;top:778px" width="16" height="15" viewBox="0 0 16 15"><path d="M1 1h14l-3 3v4H2z" fill="#ff0"/><path d="M2 1h5M4 1v7M4 4h3M9 1l3 7 3-7" stroke="#000" stroke-width="1.2" fill="none"/><path d="M1 9q7 4 14 0" stroke="#f00" stroke-width="1.4" fill="none" stroke-dasharray="1.5 1"/><path d="M1 11q7 4 14 0" stroke="#0c0" stroke-width="1.4" fill="none" stroke-dasharray="1.5 1"/><path d="M1 13q7 3 14 0" stroke="#00f" stroke-width="1.6" fill="none" stroke-dasharray="1.5 1"/></svg>
<div class="a mono" style="left:700px;top:781px;font-size:10px;color:#fff;white-space:pre">FIELDVIEW for Wi...</div>

<div class="a" style="left:830px;top:774px;width:160px;height:23px;border-radius:3px;background:#1F4FB8;box-shadow:inset 1px 1px #173F98,inset -1px -1px #2A60CC"></div>
<svg class="a" style="left:841px;top:778px" width="16" height="15" viewBox="0 0 16 15"><path d="M1 1h14l-3 3v4H2z" fill="#ff0"/><path d="M2 1h5M4 1v7M4 4h3M9 1l3 7 3-7" stroke="#000" stroke-width="1.2" fill="none"/><path d="M1 9q7 4 14 0" stroke="#f00" stroke-width="1.4" fill="none" stroke-dasharray="1.5 1"/><path d="M1 11q7 4 14 0" stroke="#0c0" stroke-width="1.4" fill="none" stroke-dasharray="1.5 1"/><path d="M1 13q7 3 14 0" stroke="#00f" stroke-width="1.6" fill="none" stroke-dasharray="1.5 1"/></svg>
<div class="a mono" style="left:860px;top:781px;font-size:10px;color:#fff;white-space:pre">FIELDVIEW for Wi...</div>

<svg class="a" style="left:1131px;top:778px" width="18" height="14" viewBox="0 0 18 14"><path d="M4 1h1l1 1 1-1 1 1 1-1 1 1 1-1 1 1v2" fill="none" stroke="#000" stroke-width="1"/><rect x="1" y="5" width="16" height="8" rx="1.5" fill="#fff" stroke="#000" stroke-width="1.2"/><path d="M3 7.5h12M3 9.5h12" stroke="#333" stroke-dasharray="1 1"/></svg>
<!-- tray -->
<div class="a" style="left:1185px;top:770px;width:95px;height:30px;background:linear-gradient(#1A9AF0 0,#18A0F4 2px,#1390EC 6px,#1188E8 26px,#0F7CD8 30px);border-left:1px solid #1060C8"></div>
<svg class="a" style="left:1180px;top:742px" width="100" height="58" viewBox="0 0 100 58"><path d="M9 52C3 42 12 26 28 24c8-1 10 3 6 8-5 6-14 8-22 8" fill="none" stroke="#D89A60" stroke-width="5" opacity=".6"/><text x="33" y="41" font-family="Liberation Serif" font-style="italic" font-weight="bold" font-size="23" fill="#1A3F70" opacity=".8" letter-spacing="-0.5">wor<tspan fill="#C89040">k</tspan>s</text></svg>
<svg class="a" style="left:1195px;top:775px" width="18" height="20" viewBox="0 0 18 20"><rect x="6" y="1" width="9" height="8" fill="#3A4A88" stroke="#dde" stroke-width=".8"/><rect x="1" y="6" width="9" height="8" fill="#3A4A88" stroke="#dde" stroke-width=".8"/><path d="M9 13l7 6M16 13l-7 6" stroke="#f03030" stroke-width="2"/></svg>
<div class="a" style="left:1214px;top:777px;width:16px;height:16px;background:#E01818"></div>
<svg class="a" style="left:1214px;top:777px" width="16" height="16"><path d="M2 14C5 8 8 3 11 3s2 8 3 11" fill="none" stroke="#fff" stroke-width="1.6"/></svg>
<div class="a mono" style="left:1237px;top:781px;font-size:10px;letter-spacing:-0.3px;color:#fff;white-space:pre">14:44</div>

</body></html>
